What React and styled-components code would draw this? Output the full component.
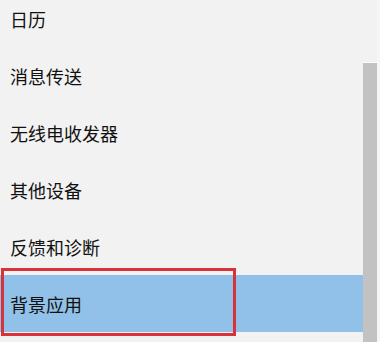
import React from "react";
import styled, { createGlobalStyle } from "styled-components";

const GlobalStyle = createGlobalStyle`
  html, body {
    margin: 0;
    padding: 0;
    background: #f2f2f2;
  }
  body {
    font-family: "Noto Sans CJK SC", "Noto Sans", sans-serif;
  }
`;

const Window = styled.div`
  display: flex;
  width: 380px;
  height: 342px;
  overflow: hidden;
  background: #f2f2f2;
`;

const List = styled.ul`
  flex: 0 0 363px;
  list-style: none;
  margin: -10.5px 0 0;
  padding: 0;
`;

const Row = styled.li`
  position: relative;
  display: flex;
  align-items: center;
  height: 57px;
  padding: 2px 0 0 10px;
  box-sizing: border-box;
  font-size: 18px;
  color: #111;
  background: ${(p) => (p.$selected ? "#91c0e8" : "transparent")};
`;

const Highlight = styled.span`
  position: absolute;
  left: 1px;
  top: -7px;
  width: 235px;
  height: 68px;
  box-sizing: border-box;
  border: 3px solid #d8323b;
  pointer-events: none;
`;

const ScrollTrack = styled.div`
  flex: 0 0 14px;
  display: flex;
  flex-direction: column;
`;

const ScrollGap = styled.div`
  height: 62px;
  border-bottom: 1px solid #fbfbfb;
`;

const ScrollThumb = styled.div`
  flex: 1;
  background: #c2c2c2;
`;

const Gutter = styled.div`
  flex: 1;
  background: #f6f6f6;
`;

const items = ["日历", "消息传送", "无线电收发器", "其他设备", "反馈和诊断", "背景应用"];

export default function App() {
  return (
    <>
      <GlobalStyle />
      <Window>
        <List>
          {items.map((label, i) => {
            const selected = i === items.length - 1;
            return (
              <Row key={label} $selected={selected}>
                {label}
                {selected && <Highlight />}
              </Row>
            );
          })}
        </List>
        <ScrollTrack>
          <ScrollGap />
          <ScrollThumb />
        </ScrollTrack>
        <Gutter />
      </Window>
    </>
  );
}
